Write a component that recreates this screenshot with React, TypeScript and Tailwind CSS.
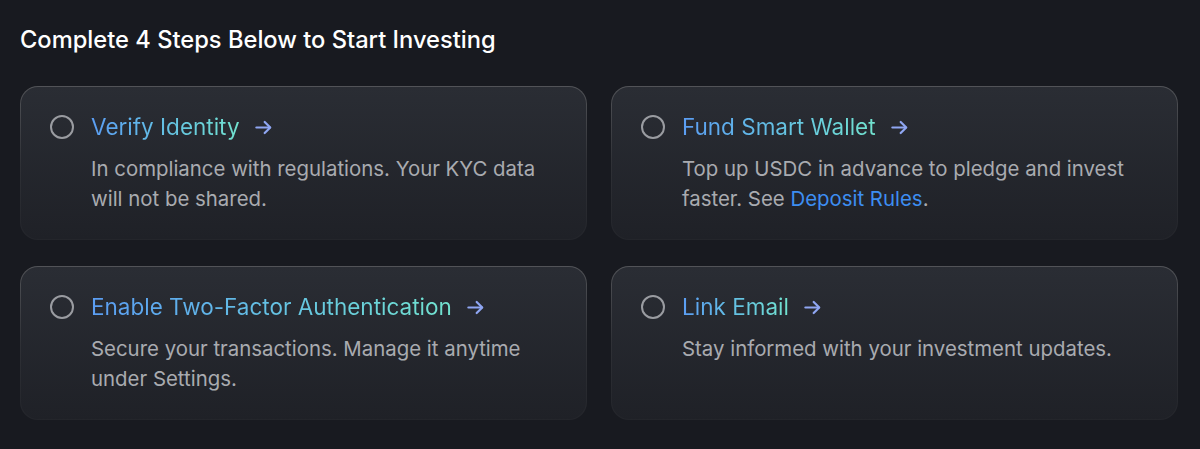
import { ReactNode } from 'react';

type Step = {
  title: string;
  body: ReactNode;
};

const steps: Step[] = [
  {
    title: 'Verify Identity',
    body: 'In compliance with regulations. Your KYC data will not be shared.',
  },
  {
    title: 'Fund Smart Wallet',
    body: (
      <>
        Top up USDC in advance to pledge and invest faster. See{' '}
        <a className="text-[#3d8ef2]">Deposit Rules</a>.
      </>
    ),
  },
  {
    title: 'Enable Two-Factor Authentication',
    body: 'Secure your transactions. Manage it anytime under Settings.',
  },
  {
    title: 'Link Email',
    body: 'Stay informed with your investment updates.',
  },
];

function StepCard({ step }: { step: Step }) {
  return (
    <div className="rounded-[18px] bg-gradient-to-b from-white/25 via-white/10 to-white/5 p-px">
      <div className="h-[152px] rounded-[17px] bg-gradient-to-b from-[#2a2d34] to-[#1f2127] pl-[29px] pr-6 pt-[25px]">
        <div className="flex items-center gap-[17px]">
          <span className="h-6 w-6 shrink-0 rounded-full border-2 border-[#9a9ca1]" />
          <span className="flex items-center gap-[14px] text-[22.5px] leading-[30px]">
            <span className="bg-gradient-to-r from-[#5b9df3] to-[#72e3cf] bg-clip-text text-transparent">
              {step.title}
            </span>
            <svg width="19" height="19" viewBox="0 0 24 24" fill="none" stroke="#8fa6f2" strokeWidth="2.8" strokeLinecap="round" strokeLinejoin="round">
              <path d="M3 12h17" />
              <path d="M13.5 5l7 7-7 7" />
            </svg>
          </span>
        </div>
        <p className="mt-3 pl-[41px] text-[20.4px] leading-[30px] text-[#a9abb0]">{step.body}</p>
      </div>
    </div>
  );
}

export default function App() {
  return (
    <div
      className="min-h-[449px] bg-[#181a20] pl-5 pr-[22px] pt-[26px]"
      style={{ fontFamily: 'Inter, "Noto Sans", sans-serif' }}
    >
      <h1 className="text-[23.7px] font-medium leading-[28px] text-white">
        Complete 4 Steps Below to Start Investing
      </h1>
      <div className="mt-8 grid grid-cols-2 gap-x-6 gap-y-[26px]">
        {steps.map((s) => (
          <StepCard key={s.title} step={s} />
        ))}
      </div>
    </div>
  );
}
